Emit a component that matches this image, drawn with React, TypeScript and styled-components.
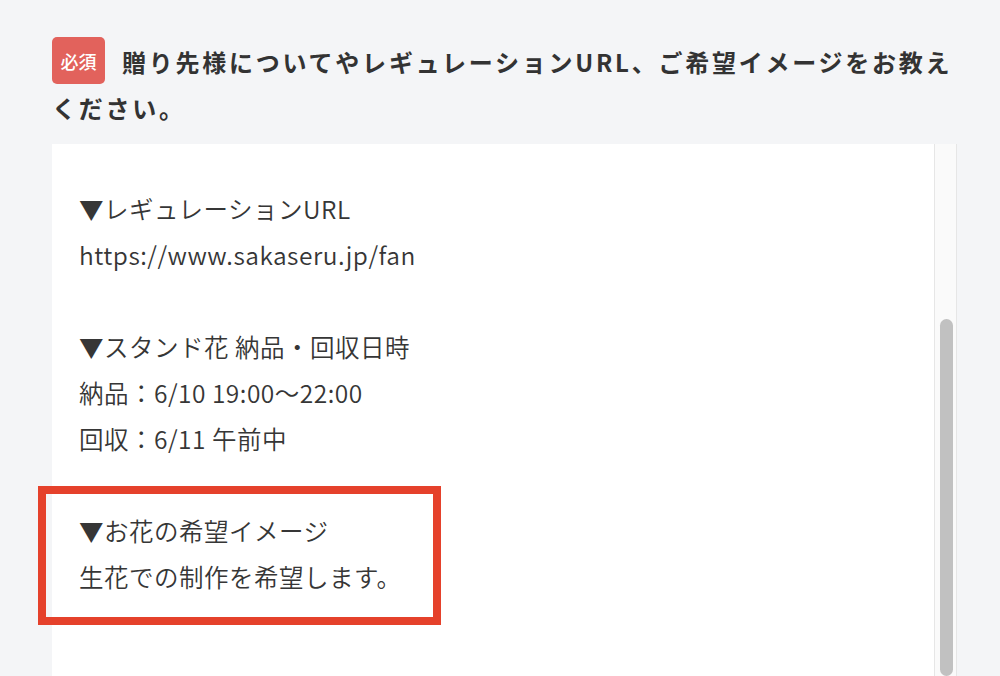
import React, { useLayoutEffect, useRef, useState } from "react";
import styled, { createGlobalStyle } from "styled-components";

const lines = [
  "▼贈り先様",
  "〇〇〇〇 様",
  "",
  "▼公演名",
  "〇〇〇〇 LIVE 2024",
  "",
  "▼レギュレーションURL",
  "https://www.sakaseru.jp/fan",
  "",
  "▼スタンド花 納品・回収日時",
  "納品：6/10 19:00～22:00",
  "回収：6/11 午前中",
  "",
  "▼お花の希望イメージ",
  "生花での制作を希望します。",
  "",
];

function App() {
  const scrollRef = useRef<HTMLDivElement>(null);
  const [thumb, setThumb] = useState({ top: 0, height: 0 });

  useLayoutEffect(() => {
    const el = scrollRef.current;
    if (!el) return;
    el.scrollTop = el.scrollHeight;
    const ratio = el.clientHeight / el.scrollHeight;
    setThumb({
      top: (el.scrollTop / el.scrollHeight) * el.clientHeight,
      height: ratio * el.clientHeight,
    });
  }, []);

  return (
    <>
      <GlobalStyle />
      <Page>
        <Question>
          <Badge>必須</Badge>
          贈り先様についてやレギュレーションURL、ご希望イメージをお教えください。
        </Question>
        <AnswerWrap>
          <AnswerBox ref={scrollRef}>
            {lines.map((line, index) => (
              <Line key={index}>{line || "\u00a0"}</Line>
            ))}
          </AnswerBox>
          <ScrollTrack>
            <ScrollThumb style={{ top: thumb.top, height: thumb.height }} />
          </ScrollTrack>
          <Highlight />
        </AnswerWrap>
      </Page>
    </>
  );
}

export default App;

const GlobalStyle = createGlobalStyle`
  html, body {
    margin: 0;
    padding: 0;
    background: #f4f5f7;
    height: 676px;
    overflow: hidden;
  }
  body {
    font-family: "Noto Sans CJK JP", "Noto Sans", sans-serif;
    color: #333;
  }
`;

const Page = styled.div`
  padding: 39px 43px 0 52px;
  display: flex;
  flex-direction: column;
  gap: 13px;
`;

const Question = styled.div`
  font-size: 24px;
  font-weight: 700;
  line-height: 46px;
  letter-spacing: 0.115em;
  color: #333;
`;

const Badge = styled.span`
  display: inline-flex;
  align-items: center;
  justify-content: center;
  width: 53px;
  height: 47px;
  margin: -2px 17px -1px 0;
  border-radius: 5px;
  background: #e2625c;
  color: #fff;
  font-size: 18px;
  font-weight: 500;
  letter-spacing: 0;
  vertical-align: top;
`;

const AnswerWrap = styled.div`
  position: relative;
  height: 532px;
  display: flex;
  background: #fff;
`;

const AnswerBox = styled.div`
  flex: 1;
  box-sizing: border-box;
  padding: 26px 27px 30px;
  overflow: hidden;
  font-size: 24.5px;
  font-weight: 350;
  line-height: 46px;
  letter-spacing: 0.5px;
  color: #363636;
`;

const Line = styled.div`
  white-space: pre;
`;

const ScrollTrack = styled.div`
  position: relative;
  width: 21px;
  flex-shrink: 0;
  background: #fafafa;
  border-left: 1px solid #e6e6e6;
  border-right: 1px solid #e6e6e6;
`;

const ScrollThumb = styled.div`
  position: absolute;
  left: 5px;
  width: 13px;
  border-radius: 7px;
  background: #c1c1c1;
`;

const Highlight = styled.div`
  position: absolute;
  left: -14px;
  top: 342px;
  width: 403px;
  height: 139px;
  box-sizing: border-box;
  border: 8px solid #e5412b;
  pointer-events: none;
`;
